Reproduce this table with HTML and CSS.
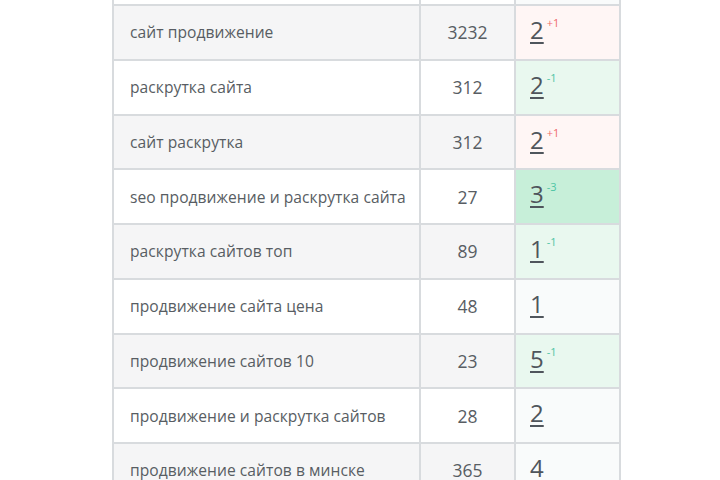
FILE: index.html
```html
<!DOCTYPE html>
<html lang="ru">
<head>
<meta charset="utf-8">
<link rel="stylesheet" href="styles.css">
</head>
<body>
<div class="wrap">
<table class="pos">
  <tr class="stub"><td class="q"></td><td class="n"></td><td class="p p-blank"></td></tr>
  <tr class="odd"><td class="q">сайт продвижение</td><td class="n">3232</td><td class="p p-down"><span class="d">2</span><sup class="up">+1</sup></td></tr>
  <tr><td class="q">раскрутка сайта</td><td class="n">312</td><td class="p p-gain"><span class="d">2</span><sup class="gn">-1</sup></td></tr>
  <tr class="odd"><td class="q">сайт раскрутка</td><td class="n">312</td><td class="p p-down"><span class="d">2</span><sup class="up">+1</sup></td></tr>
  <tr><td class="q">seo продвижение и раскрутка сайта</td><td class="n">27</td><td class="p p-big"><span class="d">3</span><sup class="gn">-3</sup></td></tr>
  <tr class="odd"><td class="q">раскрутка сайтов топ</td><td class="n">89</td><td class="p p-gain"><span class="d">1</span><sup class="gn">-1</sup></td></tr>
  <tr><td class="q">продвижение сайта цена</td><td class="n">48</td><td class="p p-blank"><span class="d">1</span></td></tr>
  <tr class="odd"><td class="q">продвижение сайтов 10</td><td class="n">23</td><td class="p p-gain"><span class="d">5</span><sup class="gn">-1</sup></td></tr>
  <tr><td class="q">продвижение и раскрутка сайтов</td><td class="n">28</td><td class="p p-blank"><span class="d">2</span></td></tr>
  <tr class="odd"><td class="q">продвижение сайтов в минске</td><td class="n">365</td><td class="p p-blank"><span class="d">4</span></td></tr>
</table>
</div>
</body>
</html>
```
FILE: styles.css
```css
html, body {
  margin: 0;
  padding: 0;
  background: #ffffff;
}
.wrap {
  padding-left: 112px;
  overflow: hidden;
  height: 480px;
}
.pos {
  border-collapse: collapse;
  font-family: "Open Sans", "Noto Sans", sans-serif;
  color: #585d63;
}
.pos td {
  border: 2px solid #d8dbde;
  height: 54.75px;
  padding: 0;
  box-sizing: border-box;
  background: #ffffff;
}
.pos tr.stub td {
  height: 5px;
  font-size: 0;
  line-height: 0;
  padding: 0 !important;
  border-top: none;
}
.pos tr.odd td.q,
.pos tr.odd td.n {
  background: #f5f5f6;
}
.q {
  width: 307px;
  padding-left: 16px !important;
  font-size: 15.6px;
  letter-spacing: 0.05px;
}
.n {
  width: 95px;
  text-align: center;
  font-size: 17.5px;
}
.p {
  width: 105px;
  vertical-align: top;
  padding: 7px 0 0 14px !important;
  white-space: nowrap;
}
.pos td.p-down { background: #fff6f5; }
.pos td.p-gain { background: #e9f8ef; }
.pos td.p-big { background: #c7efd9; }
.pos td.p-blank { background: #f9fbfb; }
.d {
  font-size: 24px;
  color: #4f555c;
  text-decoration: underline;
  text-underline-offset: 3px;
  text-decoration-thickness: 2px;
}
sup {
  font-size: 11px;
  margin-left: 3px;
  vertical-align: 12px;
}
.up { color: #ef6a6a; }
.gn { color: #4cc4a4; }
```
